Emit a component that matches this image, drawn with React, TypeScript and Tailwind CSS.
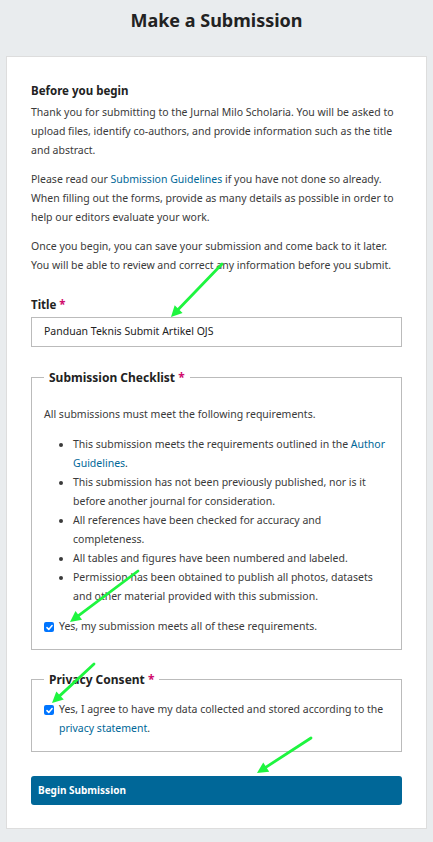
import React from 'react';

const Star = () => <span className="text-[#d00a6c]"> *</span>;

const Check = () => (
  <span className="mt-[5px] flex h-[10px] w-[10px] flex-none items-center justify-center rounded-[2px] bg-[#0075ff]">
    <svg viewBox="0 0 10 10" className="h-[9px] w-[9px]">
      <path d="M2.2 5.1 L4.2 7.1 L7.9 2.9" stroke="white" strokeWidth="1.7" fill="none" strokeLinecap="round" strokeLinejoin="round" />
    </svg>
  </span>
);

const Link = ({ children }: { children: React.ReactNode }) => (
  <a href="#" className="text-[#006798]">{children}</a>
);

type ArrowProps = { x1: number; y1: number; x2: number; y2: number };

// green annotation arrows drawn over the form
const Arrow: React.FC<ArrowProps> = ({ x1, y1, x2, y2 }) => {
  const dx = x2 - x1;
  const dy = y2 - y1;
  const len = Math.hypot(dx, dy);
  const ux = dx / len;
  const uy = dy / len;
  const hl = 11;
  const hw = 5.5;
  const bx = x2 - ux * hl;
  const by = y2 - uy * hl;
  const px = -uy;
  const py = ux;
  const pts = `${x2},${y2} ${bx + px * hw},${by + py * hw} ${bx - px * hw},${by - py * hw}`;
  return (
    <g>
      <line x1={x1} y1={y1} x2={bx + ux * 2} y2={by + uy * 2} stroke="#1ef53f" strokeWidth="2.8" strokeLinecap="round" />
      <polygon points={pts} fill="#1ef53f" />
    </g>
  );
};

const checklist: React.ReactNode[] = [
  <>This submission meets the requirements outlined in the <Link>Author Guidelines</Link>.</>,
  'This submission has not been previously published, nor is it before another journal for consideration.',
  'All references have been checked for accuracy and completeness.',
  'All tables and figures have been numbered and labeled.',
  'Permission has been obtained to publish all photos, datasets and other material provided with this submission.',
];

export default function App() {
  return (
    <div className="relative min-h-screen bg-[#e9ecee] font-['Noto_Sans',sans-serif] text-[#3a3a3a]">
      <h1 className="pt-[7px] text-center text-[18px] font-bold leading-[27px] text-[#222]">Make a Submission</h1>

      <div className="mx-[6px] mt-[22px] border border-[#dddddd] bg-white px-[24px] pt-[24px] pb-[23px]">
        <h2 className="mb-[3px] text-[11.5px] font-bold leading-[19px] text-[#222]">Before you begin</h2>
        <div className="space-y-[10px] text-[10.5px] leading-[19px]">
          <p>
            Thank you for submitting to the Jurnal Milo Scholaria. You will be asked to upload files, identify
            co-authors, and provide information such as the title and abstract.
          </p>
          <p>
            Please read our <Link>Submission Guidelines</Link> if you have not done so already. When filling out the
            forms, provide as many details as possible in order to help our editors evaluate your work.
          </p>
          <p>
            Once you begin, you can save your submission and come back to it later. You will be able to review and
            correct any information before you submit.
          </p>
        </div>

        <div className="mt-[20px]">
          <label className="block text-[11.5px] font-bold leading-[19px] text-[#222]">
            Title<Star />
          </label>
          <div className="mt-[3px] flex h-[30px] items-center border border-[#bbbbbb] pl-[12px] text-[10.5px] text-[#222]">
            Panduan Teknis Submit Artikel OJS
          </div>
        </div>

        <fieldset className="mt-[21px] border border-[#bbbbbb] pl-[12px] pr-[8px] pb-[13px]">
          <legend className="px-[5px] text-[12px] font-bold leading-[19px] text-[#222]">
            Submission Checklist<Star />
          </legend>
          <div className="mt-[18px] text-[10.5px] leading-[19px]">
            <p>All submissions must meet the following requirements.</p>
            <ul className="mt-[11px] list-disc pl-[29px]">
              {checklist.map((item, i) => (
                <li key={i}>{item}</li>
              ))}
            </ul>
            <label className="mt-[11px] flex items-start gap-[5px]">
              <Check />
              <span>Yes, my submission meets all of these requirements.</span>
            </label>
          </div>
        </fieldset>

        <fieldset className="mt-[20px] border border-[#bbbbbb] pl-[12px] pr-[8px] pb-[13px]">
          <legend className="px-[5px] text-[12px] font-bold leading-[19px] text-[#222]">
            Privacy Consent<Star />
          </legend>
          <label className="mt-[11px] flex items-start gap-[5px] text-[10.5px] leading-[19px]">
            <Check />
            <span>
              Yes, I agree to have my data collected and stored according to the <Link>privacy statement</Link>.
            </span>
          </label>
        </fieldset>

        <button className="mt-[24px] flex h-[29px] w-full items-center rounded-[3px] bg-[#006798] px-[7px] text-left text-[10px] font-bold text-white">
          Begin Submission
        </button>
      </div>

      <svg className="pointer-events-none absolute left-0 top-0 h-[842px] w-[433px]" viewBox="0 0 433 842">
        <Arrow x1={222} y1={264} x2={171} y2={317} />
        <Arrow x1={138} y1={571} x2={70} y2={622} />
        <Arrow x1={94} y1={664} x2={52} y2={703} />
        <Arrow x1={311} y1={738} x2={257} y2={773} />
      </svg>
    </div>
  );
}
